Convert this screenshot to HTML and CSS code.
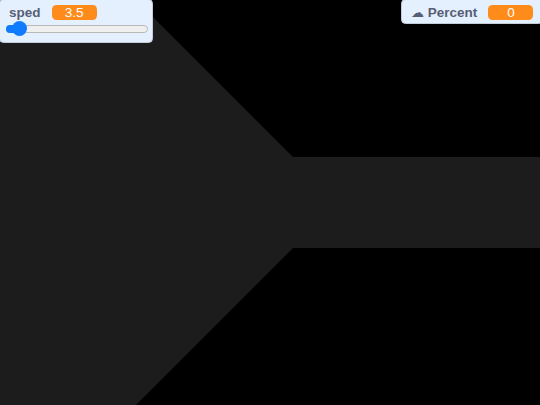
FILE: index.html
```html
<!DOCTYPE html>
<html>
<head>
<meta charset="utf-8">
<link rel="stylesheet" href="styles.css">
</head>
<body>
<div class="stage">
  <svg class="canvas" width="540" height="405" viewBox="0 0 540 405">
    <defs>
      <filter id="soft" x="-5%" y="-5%" width="110%" height="110%">
        <feGaussianBlur stdDeviation="0.7"/>
      </filter>
    </defs>
    <polygon points="-5,-5 131,-5 293,157 545,157 545,248 293,248 136,405 -5,410" fill="#1d1d1d" filter="url(#soft)"/>
  </svg>

  <div class="monitor sped">
    <div class="row">
      <span class="label">sped</span>
      <span class="value">3.5</span>
    </div>
    <div class="slider">
      <div class="fill"></div>
      <div class="thumb"></div>
    </div>
  </div>

  <div class="monitor percent">
    <div class="row">
      <span class="label"><span class="cloud">☁</span> Percent</span>
      <span class="value">0</span>
    </div>
  </div>
</div>
</body>
</html>
```

FILE: styles.css
```css
html, body {
  margin: 0;
  padding: 0;
  background: #000;
}

.stage {
  position: relative;
  width: 540px;
  height: 405px;
  overflow: hidden;
  background: #000;
  font-family: "Liberation Sans", Arial, sans-serif;
}

.canvas {
  position: absolute;
  left: 0;
  top: 0;
}

.monitor {
  position: absolute;
  box-sizing: border-box;
  background: #e5f0ff;
  border: 1px solid #c3ccd9;
  border-radius: 4.5px;
  padding: 4.5px 3.4px 3.4px;
  font-size: 13.5px;
  display: flex;
  flex-direction: column;
}

.sped {
  left: -1px;
  top: -1px;
  width: 154px;
  height: 44px;
}

.percent {
  left: 401px;
  top: -1px;
  height: 25px;
}

.row {
  display: flex;
  flex-direction: row;
  align-items: center;
  height: 15px;
}

.label {
  font-weight: bold;
  color: #575e75;
  margin: 0 5.6px;
  white-space: nowrap;
  line-height: 15px;
}

.cloud {
  font-family: "DejaVu Sans", sans-serif;
  font-weight: normal;
  font-size: 13px;
}

.value {
  min-width: 45px;
  box-sizing: border-box;
  text-align: center;
  color: #fff;
  background: #ff8c1a;
  border-radius: 4.5px;
  margin: 0 5.6px;
  padding: 0 2.25px;
  line-height: 15px;
  height: 15px;
}

.slider {
  position: relative;
  margin: 5.5px 0 0 2.6px;
  width: 142px;
  height: 8px;
  box-sizing: border-box;
  border: 1px solid #b9b9b9;
  border-radius: 4px;
  background: #efefef;
}

.fill {
  position: absolute;
  left: -1px;
  top: -1px;
  width: 14px;
  height: 8px;
  border-radius: 4px 0 0 4px;
  background: #0f7bff;
}

.thumb {
  position: absolute;
  left: 5px;
  top: -5px;
  width: 15px;
  height: 15px;
  border-radius: 50%;
  background: #0f7bff;
}
```
